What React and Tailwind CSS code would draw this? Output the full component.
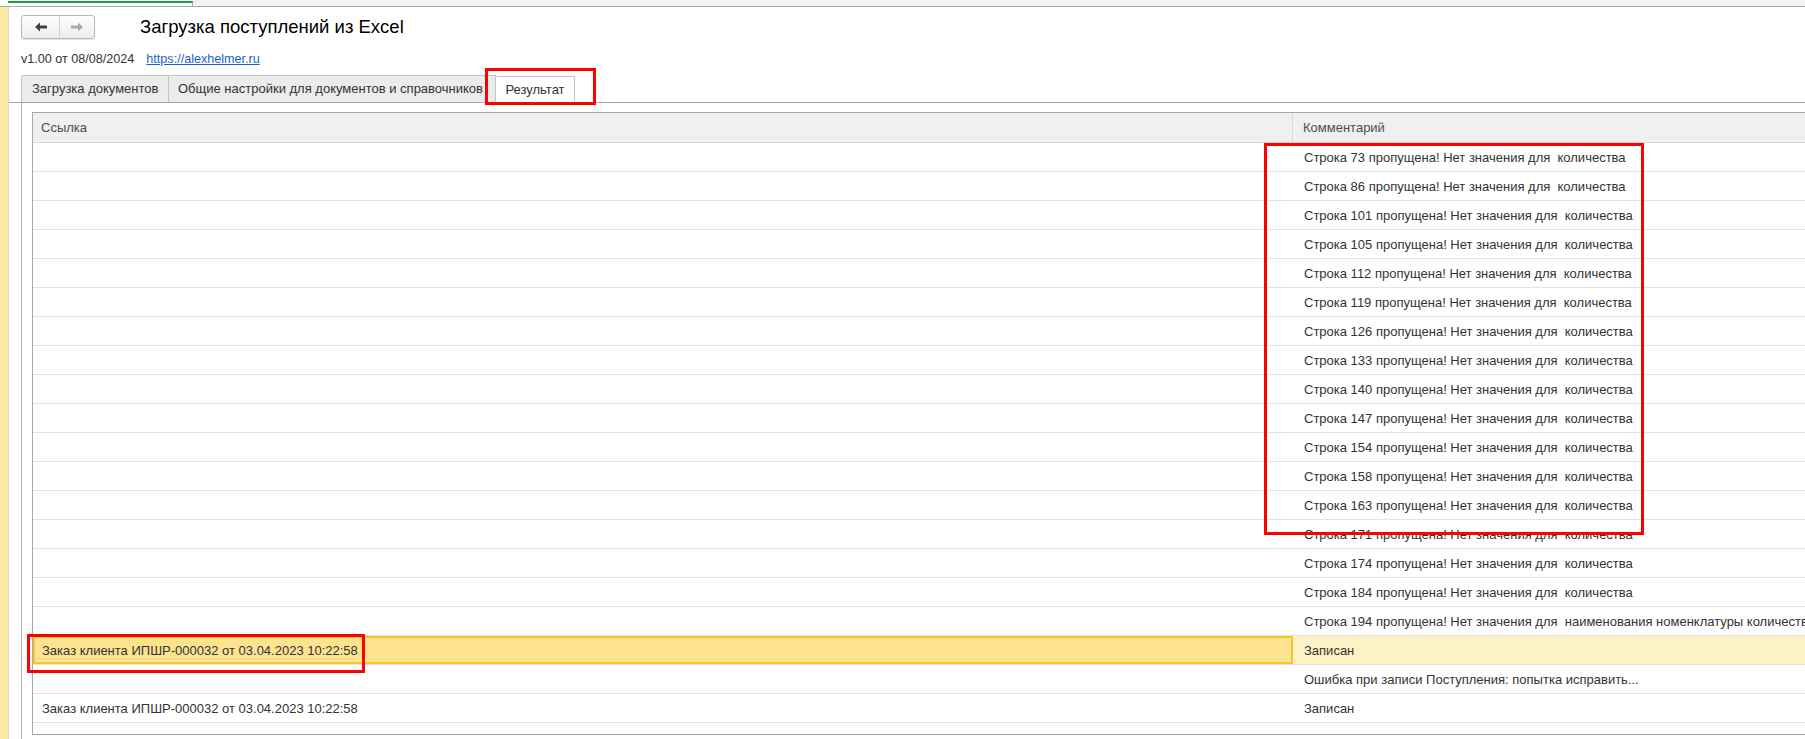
import React from 'react';

const rows = [
  { ref: '', comment: 'Строка 73 пропущена! Нет значения для  количества' },
  { ref: '', comment: 'Строка 86 пропущена! Нет значения для  количества' },
  { ref: '', comment: 'Строка 101 пропущена! Нет значения для  количества' },
  { ref: '', comment: 'Строка 105 пропущена! Нет значения для  количества' },
  { ref: '', comment: 'Строка 112 пропущена! Нет значения для  количества' },
  { ref: '', comment: 'Строка 119 пропущена! Нет значения для  количества' },
  { ref: '', comment: 'Строка 126 пропущена! Нет значения для  количества' },
  { ref: '', comment: 'Строка 133 пропущена! Нет значения для  количества' },
  { ref: '', comment: 'Строка 140 пропущена! Нет значения для  количества' },
  { ref: '', comment: 'Строка 147 пропущена! Нет значения для  количества' },
  { ref: '', comment: 'Строка 154 пропущена! Нет значения для  количества' },
  { ref: '', comment: 'Строка 158 пропущена! Нет значения для  количества' },
  { ref: '', comment: 'Строка 163 пропущена! Нет значения для  количества' },
  { ref: '', comment: 'Строка 171 пропущена! Нет значения для  количества' },
  { ref: '', comment: 'Строка 174 пропущена! Нет значения для  количества' },
  { ref: '', comment: 'Строка 184 пропущена! Нет значения для  количества' },
  { ref: '', comment: 'Строка 194 пропущена! Нет значения для  наименования номенклатуры количества' },
  { ref: 'Заказ клиента ИПШР-000032 от 03.04.2023 10:22:58', comment: 'Записан', active: true },
  { ref: '', comment: 'Ошибка при записи Поступления: попытка исправить...' },
  { ref: 'Заказ клиента ИПШР-000032 от 03.04.2023 10:22:58', comment: 'Записан' },
];

// --- nav arrows ---
function Arrow({ dir, color }) {
  return (
    <svg width="14" height="10" viewBox="0 0 14 10">
      {dir === 'left' ? (
        <path d="M1 5 L6 0.5 L6 3.5 L13 3.5 L13 6.5 L6 6.5 L6 9.5 Z" fill={color} />
      ) : (
        <path d="M13 5 L8 0.5 L8 3.5 L1 3.5 L1 6.5 L8 6.5 L8 9.5 Z" fill={color} />
      )}
    </svg>
  );
}

function Row({ row }) {
  if (row.active) {
    return (
      <div className="flex h-[29px] border-b border-[#e4e4e4]">
        <div className="w-[1260px] shrink-0 bg-[#fde38f] border-2 border-[#f6c52b] flex items-center pl-[7px] pt-[2px] text-[#333333] whitespace-pre">
          {row.ref}
        </div>
        <div className="flex-1 bg-[#fdf1c6] flex items-center pl-[11px] pt-[2px] text-[#333333] whitespace-pre">{row.comment}</div>
      </div>
    );
  }
  return (
    <div className="flex h-[29px] border-b border-[#e4e4e4]">
      <div className="w-[1260px] shrink-0 flex items-center pl-[9px] pt-[2px] text-[#333333] whitespace-pre">{row.ref}</div>
      <div className="flex-1 flex items-center pl-[11px] pt-[2px] text-[#333333] whitespace-pre overflow-hidden">{row.comment}</div>
    </div>
  );
}

export default function App() {
  return (
    <div className="relative w-[1805px] h-[739px] overflow-hidden bg-white text-[13px] font-['Liberation_Sans',Arial,sans-serif]">
      {/* top strip */}
      <div className="flex h-[7px] border-b border-[#a8a8a8]">
        <div className="w-[8px] bg-white"></div>
        <div className="w-[185px] bg-white border-t-[2px] border-t-[#1e9b45] border-r border-r-[#a8a8a8] mt-[1px]"></div>
        <div className="flex-1 bg-[#f2f2f2]"></div>
      </div>

      <div className="flex h-[732px]">
        <div className="w-[9px] shrink-0 bg-[#fbe9a2] border-r border-[#d6d6d6]"></div>

        <div className="flex-1 flex flex-col pl-[12px]">
          {/* header */}
          <div className="flex items-center mt-[8px] h-[24px]">
            <div className="flex h-[24px] w-[74px] rounded-[3px] border border-[#b8b8b8] bg-gradient-to-b from-white to-[#ececec] shadow-[0_1px_1px_rgba(0,0,0,0.12)]">
              <div className="w-[38px] flex items-center justify-center border-r border-[#d0d0d0]">
                <Arrow dir="left" color="#404040" />
              </div>
              <div className="flex-1 flex items-center justify-center">
                <Arrow dir="right" color="#a8a8a8" />
              </div>
            </div>
            <div className="ml-[45px] text-[18.5px] text-black leading-none">Загрузка поступлений из Excel</div>
          </div>

          <div className="flex items-center mt-[13px] h-[14px] text-[12.6px] text-[#333333]">
            <span>v1.00 от 08/08/2024</span>
            <span className="ml-[12px] text-[#1a5fcf] underline">https://alexhelmer.ru</span>
          </div>

          {/* tabs */}
          <div className="flex items-end mt-[10px] h-[27px] border-b border-[#a8a8a8] -ml-[12px] pl-[12px] text-[13px] text-[#333333]">
            <div className="h-[27px] w-[148px] flex items-center pl-[10px] bg-[#ececec] border border-b-0 border-[#c4c4c4] rounded-t-[2px] whitespace-nowrap">
              Загрузка документов
            </div>
            <div className="h-[27px] w-[327px] flex items-center pl-[9px] bg-[#ececec] border border-l-0 border-b-0 border-[#c4c4c4] overflow-hidden whitespace-nowrap">
              Общие настройки для документов и справочников
            </div>
            <div className="h-[27px] w-[79px] -mb-px flex items-center justify-center bg-white border border-b-0 border-l-0 border-[#c4c4c4] rounded-t-[2px]">
              Результат
            </div>
          </div>

          {/* panel */}
          <div className="flex-1 border-l border-[#b0b0b0] pl-[10px] pt-[9px]">
            <div className="border border-[#a8a8a8] border-r-0 h-[623px] overflow-hidden">
              <div className="flex h-[30px] bg-[#f0f0f0] border-b border-[#d8d8d8] text-[#4d4d4d]">
                <div className="w-[1260px] shrink-0 flex items-center pl-[8px] pt-[1px] border-r border-[#d8d8d8]">Ссылка</div>
                <div className="flex-1 flex items-center pl-[10px] pt-[1px]">Комментарий</div>
              </div>
              {rows.map((r, i) => (
                <Row key={i} row={r} />
              ))}
            </div>
          </div>
        </div>
      </div>

      {/* annotation boxes */}
      <div className="absolute left-[485px] top-[68px] w-[111px] h-[37px] border-[3px] border-[#ff0000]"></div>
      <div className="absolute left-[1264px] top-[143px] w-[380px] h-[392px] border-[3px] border-[#ff0000]"></div>
      <div className="absolute left-[27px] top-[634px] w-[338px] h-[39px] border-[3px] border-[#ff0000]"></div>
    </div>
  );
}
